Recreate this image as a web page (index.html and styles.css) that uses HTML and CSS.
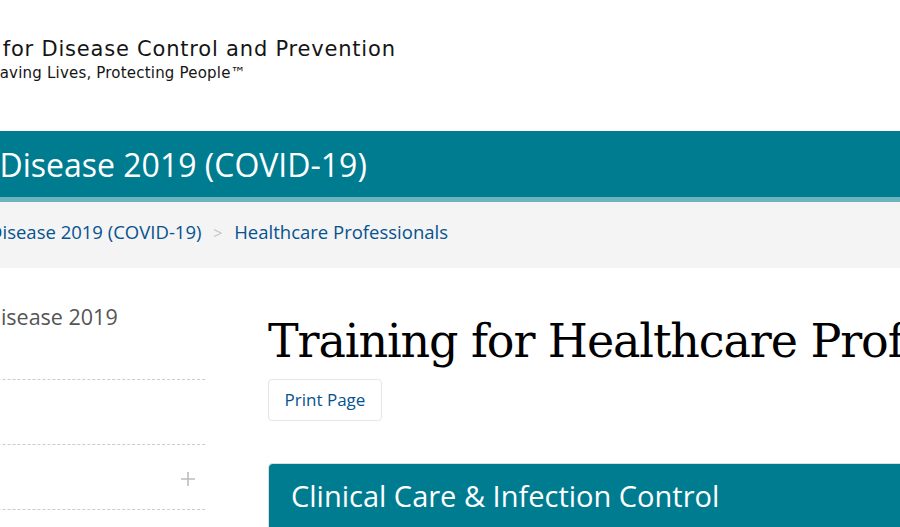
FILE: index.html
```html
<!DOCTYPE html>
<html lang="en">
<head>
    <meta charset="UTF-8">
    <meta name="viewport" content="width=device-width, initial-scale=1.0">
    <title>Training for Healthcare Professionals | CDC</title>
    <link rel="stylesheet" href="styles.css">
</head>
<body>
    <div class="page">
        <div class="logo">
            <div class="logo-name">Centers for Disease Control and Prevention</div>
            <div class="logo-tag">Saving Lives, Protecting People&trade;</div>
        </div>

        <div class="site-title">
            <div class="site-title-text">Coronavirus Disease 2019 (COVID-19)</div>
        </div>

        <div class="breadcrumb">
            <a href="#">CDC</a>
            <span class="sep">&gt;</span>
            <a href="#">Coronavirus Disease 2019 (COVID-19)</a>
            <span class="sep">&gt;</span>
            <a href="#">Healthcare Professionals</a>
        </div>

        <div class="layout">
            <div class="sidebar">
                <div class="nav-title">Coronavirus Disease 2019 <span class="nowrap">(COVID-19)</span></div>
                <ul class="nav-list">
                    <li class="nav-item">Your Health</li>
                    <li class="nav-item">Testing
                        <svg class="nav-plus" width="16" height="16" viewBox="0 0 16 16">
                            <path d="M8 1v14M1 8h14" stroke="#bdbdbd" stroke-width="1.6" fill="none"/>
                        </svg>
                    </li>
                </ul>
            </div>

            <div class="main">
                <h1>Training for Healthcare Professionals</h1>
                <a href="#" class="print-btn">Print Page</a>

                <div class="card">
                    <div class="card-header">Clinical Care &amp; Infection Control</div>
                    <div class="card-body"></div>
                </div>
            </div>
        </div>
    </div>
</body>
</html>
```

FILE: styles.css
```css
* {
    margin: 0;
    padding: 0;
    box-sizing: border-box;
}

html, body {
    overflow: hidden;
}

body {
    font-family: 'Open Sans', sans-serif;
    background: white;
    color: #333;
}

a {
    text-decoration: none;
    color: #075290;
}

/* page is scrolled sideways in the shot */
.page {
    width: 1400px;
    margin-left: -250px;
}

.logo {
    height: 131px;
    padding: 36px 0 0 158px;
    font-family: 'DejaVu Sans', sans-serif;
    color: #151515;
}

.logo-name {
    font-size: 21px;
    letter-spacing: 0.8px;
    line-height: 26px;
}

.logo-tag {
    margin-left: 82px;
    font-size: 15px;
    letter-spacing: 0.2px;
    line-height: 22px;
}

.site-title {
    background: #007c91;
    border-bottom: 5px solid #6cb2bf;
    height: 71px;
    padding: 11px 0 0 60px;
}

.site-title-text {
    color: white;
    font-size: 32px;
    line-height: 46px;
}

.breadcrumb {
    background: #f4f4f4;
    height: 66px;
    padding: 16px 0 0 60px;
    font-size: 18.5px;
    line-height: 28px;
}

.breadcrumb .sep {
    color: #c4c4c4;
    margin: 0 7px;
    font-size: 16px;
}

.layout {
    display: flex;
    gap: 63px;
}

.sidebar {
    width: 455px;
    padding-left: 108px;
    padding-top: 34px;
}

.nav-title {
    font-size: 21.5px;
    line-height: 29px;
    color: #555;
    padding-bottom: 19px;
    border-bottom: 1px dashed #ccc;
}

.nowrap {
    white-space: nowrap;
}

.nav-list {
    list-style: none;
}

.nav-item {
    height: 65px;
    border-bottom: 1px dashed #ccc;
    display: flex;
    align-items: center;
    justify-content: space-between;
    font-size: 16px;
    color: #075290;
}

.nav-plus {
    margin: 3px 9px 0 0;
}

.main {
    flex: 1;
    padding-top: 43px;
}

.main h1 {
    font-family: 'DejaVu Serif', serif;
    font-weight: normal;
    font-size: 46px;
    letter-spacing: -1.1px;
    line-height: 60px;
    color: #000;
    white-space: nowrap;
    margin-bottom: 8px;
}

.print-btn {
    display: inline-block;
    width: 114px;
    height: 42px;
    border: 1px solid #e6e6e6;
    border-radius: 4px;
    text-align: center;
    line-height: 40px;
    font-size: 17px;
    color: #075290;
}

.card {
    margin-top: 42px;
    border: 1px solid #ddd;
    border-radius: 4px;
}

.card-header {
    background: #007c91;
    color: white;
    font-size: 29px;
    line-height: 40px;
    padding: 12px 22px;
    border-radius: 4px 4px 0 0;
}

.card-body {
    height: 200px;
}
```
